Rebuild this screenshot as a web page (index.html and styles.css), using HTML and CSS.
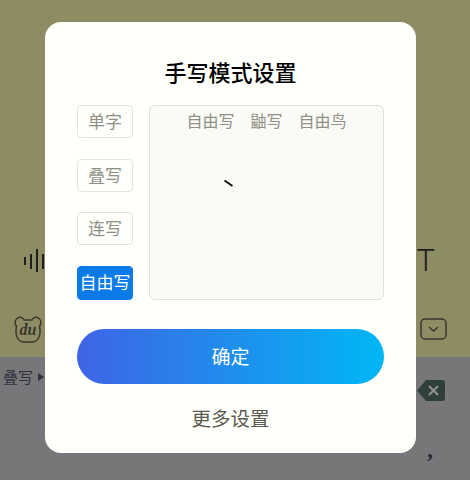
FILE: index.html
```html
<!DOCTYPE html>
<html lang="zh">
<head>
<meta charset="utf-8">
<title>手写模式设置</title>
<link rel="stylesheet" href="styles.css">
</head>
<body>
<div class="keyboard">
  <div class="kb-top">
    <div class="tool-row">
      <svg class="wave" width="21" height="24" viewBox="0 0 21 24"><path d="M1 8v8M7 5v15M13 0v23M19 5v15" stroke="#1d1d22" stroke-width="2" fill="none"/></svg>
      <span class="tool-t">T</span>
    </div>
    <div class="icon-row">
      <svg class="bear" width="30" height="27" viewBox="0 0 30 27"><path d="M4 2.500C6.500 .5 10 1 11 4h8c1-3 4.500-3.500 7-1.500 2.500 2 2.500 5.500 .5 7.500 1 5 .5 9-1 12-1.500 3-4 4-6.500 4h-8c-2.500 0-5-1-6.500-4-1.500-3-2-7-1-12C1.500 8 1.500 4.500 4 2.500z" fill="none" stroke="#38382f" stroke-width="1.500"/><text x="15" y="19" text-anchor="middle" class="du">du</text></svg>
      <svg class="chevron-box" width="27" height="22" viewBox="0 0 27 22"><rect x="1" y="1" width="25" height="20" rx="4" fill="none" stroke="#38382f" stroke-width="1.500"/><path d="M9 9l4.500 4L18 9" fill="none" stroke="#38382f" stroke-width="1.500"/></svg>
    </div>
  </div>
  <div class="kb-bottom">
    <div class="mode-row">
      <span class="mode">叠写<i class="mode-arrow"></i></span>
      <svg class="del" width="28" height="21" viewBox="0 0 28 21"><path d="M9 0h16a3 3 0 0 1 3 3v15a3 3 0 0 1-3 3H9L0 10.500z" fill="#2e3f3c"/><path d="M12 6l9 9M21 6l-9 9" stroke="#8f8f8f" stroke-width="2.200"/></svg>
    </div>
    <div class="comma-row"><span class="comma">,</span></div>
  </div>
</div>
<div class="dialog">
  <h1 class="title">手写模式设置</h1>
  <div class="body">
    <div class="modes">
      <button class="mode-btn">单字</button>
      <button class="mode-btn">叠写</button>
      <button class="mode-btn">连写</button>
      <button class="mode-btn active">自由写</button>
    </div>
    <div class="panel">
      <div class="tabs"><span>自由写</span><span>鼬写</span><span>自由鸟</span></div>
      <svg class="stroke" width="10" height="7" viewBox="0 0 10 7"><path d="M0.500 0.500L8.500 6" stroke="#111" stroke-width="2" fill="none"/></svg>
    </div>
  </div>
  <button class="confirm">确定</button>
  <div class="more">更多设置</div>
</div>
</body>
</html>
```
FILE: styles.css
```css
* { box-sizing: border-box; }
html, body { margin: 0; padding: 0; }
body {
  width: 470px;
  height: 480px;
  overflow: hidden;
  position: relative;
  font-family: "Noto Sans CJK SC", "Liberation Sans", sans-serif;
}
.keyboard { width: 470px; height: 480px; display: flex; flex-direction: column; }
.kb-top {
  height: 357px;
  background: #8e8c62;
  padding: 249px 35px 0 24px;
  display: flex;
  flex-direction: column;
}
.kb-bottom {
  flex: 1;
  background: #77777a;
  padding: 9px 25px 0 3px;
  display: flex;
  flex-direction: column;
}
.tool-row { display: flex; justify-content: space-between; align-items: flex-start; height: 34px; }
.wave { display: block; }
.tool-t { font: 300 31px/23px Roboto, "Liberation Sans", sans-serif; color: #1d1d22; }
.icon-row { display: flex; justify-content: space-between; align-items: flex-start; margin: 33px -12px 0 -11px; }
.chevron-box { margin-top: 2px; }
.mode-row { display: flex; justify-content: space-between; align-items: flex-start; }
.mode { font-size: 15px; line-height: 22px; color: #2f3240; display: flex; align-items: center; }
.mode-arrow { width: 0; height: 0; border-left: 6px solid #2f3240; border-top: 4px solid transparent; border-bottom: 4px solid transparent; margin-left: 5px; }
.del { margin-top: 14px; }
.comma-row { display: flex; justify-content: flex-end; padding-right: 12px; }
.comma { font: 700 24px/22px "Liberation Serif", serif; color: #2a2a30; margin-top: 37px; }
.dialog {
  position: absolute;
  left: 45px;
  top: 22px;
  width: 371px;
  height: 431px;
  border-radius: 16px;
  background: #fffffb;
  padding: 32px 32px 0;
  display: flex;
  flex-direction: column;
}
.title { margin: 0; text-align: center; font-size: 22px; line-height: 34px; font-weight: 500; color: #000; }
.body { display: flex; gap: 16px; margin-top: 17px; height: 195px; }
.modes { width: 56px; display: flex; flex-direction: column; justify-content: space-between; }
.mode-btn {
  height: 33px;
  padding: 0 0 2px;
  border: 1px solid #e4e4da;
  border-radius: 4px;
  background: transparent;
  font: 400 17px/1 "Noto Sans CJK SC", sans-serif;
  color: #8e9086;
  white-space: nowrap;
}
.mode-btn.active { background: #0a7be8; border-color: #0a7be8; color: #fff; height: 34px; }
.panel {
  flex: 1;
  border: 1px solid #e2e2da;
  border-radius: 6px;
  background: #fbfbf6;
  position: relative;
}
.tabs { display: flex; justify-content: center; gap: 16px; font-size: 16px; line-height: 29px; color: #8e9086; }
.stroke { position: absolute; left: 74px; top: 74px; }
.confirm {
  margin-top: 29px;
  height: 55px;
  padding: 0 0 2px;
  border: 0;
  border-radius: 28px;
  background: linear-gradient(90deg, #3f64e6, #00b7f4);
  color: #fff;
  font: 400 19px/1 "Noto Sans CJK SC", sans-serif;
}
.more { margin-top: 19px; text-align: center; font-size: 19.500px; line-height: 30px; color: #5a5a50; }
.du { font: italic 700 16px "Liberation Serif", serif; fill: #38382f; }
```
